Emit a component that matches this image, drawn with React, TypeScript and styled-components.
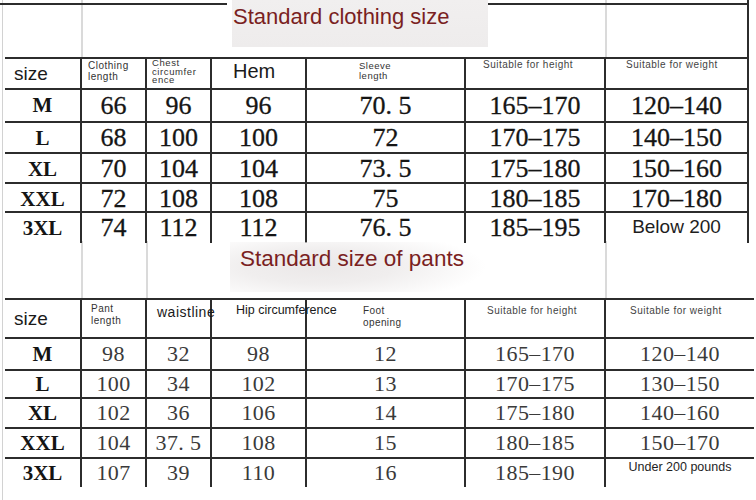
import React from 'react';
import styled, { createGlobalStyle } from 'styled-components';

const Global = createGlobalStyle`
  html, body { margin: 0; padding: 0; background: #fff; }
  body { font-family: "Liberation Sans", Arial, sans-serif; }
`;

const LINE = '#2c2c2c';

const Page = styled.div`
  width: 756px;
  height: 500px;
  overflow: hidden;
  background: linear-gradient(to right, #fff 0 2px, #d2d2d2 2px 3px, #fff 3px);
`;

const Band = styled.div<{ $h: number; $lines: number[]; $edge?: boolean }>`
  width: 749px;
  height: ${(p) => p.$h}px;
  box-sizing: border-box;
  display: flex;
  align-items: flex-start;
  border-right: ${(p) => (p.$edge ? `2px solid ${LINE}` : 'none')};
  background-image: ${(p) =>
    p.$lines
      .map(
        (x) =>
          `linear-gradient(to right, transparent ${x - 1}px, #dadada ${x - 1}px, #dadada ${x + 1}px, transparent ${x + 1}px)`
      )
      .join(', ')};
`;

const Rule = styled.div<{ $w?: number }>`
  margin-top: 3px;
  height: 0;
  border-top: 2px solid ${LINE};
  ${(p) => (p.$w ? `width: ${p.$w}px;` : 'flex: 1;')}
`;

const TitleBox = styled.div<{ $soft?: boolean; $ml: number; $mt: number; $w: number; $h: number; $pl: number }>`
  margin-left: ${(p) => p.$ml}px;
  margin-top: ${(p) => p.$mt}px;
  width: ${(p) => p.$w}px;
  height: ${(p) => p.$h}px;
  box-sizing: border-box;
  padding: 4px 0 0 ${(p) => p.$pl}px;
  background: ${(p) =>
    p.$soft
      ? 'radial-gradient(ellipse 65% 75% at 35% 50%, #ebe8e8 0%, #f0eeee 45%, rgba(255,255,255,0) 100%)'
      : 'linear-gradient(to bottom, #f1efef, #eeecec)'};
  color: #7a1f22;
  font-family: "Liberation Sans", Arial, sans-serif;
  font-size: ${(p) => (p.$soft ? 22.5 : 22)}px;
  line-height: 1.15;
  white-space: nowrap;
`;

const Cell = styled.div`
  border-right: 2px solid ${LINE};
  display: flex;
  align-items: center;
  justify-content: center;
  white-space: nowrap;
  overflow: visible;
  min-width: 0;
`;

const Table = styled.div<{ $open?: boolean }>`
  margin-left: 5px;
  width: ${(p) => (p.$open ? 749 : 744)}px;
  & ${Cell}:last-child {
    border-right: ${(p) => (p.$open ? 'none' : `2px solid ${LINE}`)};
  }
`;

const Row = styled.div<{ $h: number; $open?: boolean }>`
  display: grid;
  grid-template-columns: 77px 65px 65px 95px 159px 140px ${(p) => (p.$open ? 148 : 143)}px;
  height: ${(p) => p.$h}px;
  box-sizing: border-box;
  border-top: 2px solid ${LINE};
`;

const HeadCell = styled(Cell)<{ $pl: number; $pt?: number; $mid?: boolean }>`
  justify-content: flex-start;
  align-items: ${(p) => (p.$mid ? 'center' : 'flex-start')};
  padding-left: ${(p) => p.$pl}px;
  padding-top: ${(p) => p.$pt ?? 0}px;
`;

const Label = styled.span<{ $fs: number; $ls?: number; $lh?: number; $c?: string }>`
  font-family: "Liberation Sans", Arial, sans-serif;
  font-size: ${(p) => p.$fs}px;
  letter-spacing: ${(p) => p.$ls ?? 0}px;
  line-height: ${(p) => (p.$lh ? `${p.$lh}px` : 'normal')};
  color: ${(p) => p.$c ?? '#1a1a1a'};
  white-space: pre;
`;

const SizeName = styled.span`
  font-family: "Liberation Serif", "Times New Roman", serif;
  font-weight: bold;
  font-size: 21px;
  color: #141414;
`;

const Num = styled.span<{ $light?: boolean }>`
  font-family: "Liberation Serif", "Times New Roman", serif;
  font-size: ${(p) => (p.$light ? 22 : 26)}px;
  color: ${(p) => (p.$light ? '#3a3a3a' : '#151515')};
  letter-spacing: ${(p) => (p.$light ? 0.4 : 0)}px;
  -webkit-text-stroke: ${(p) => (p.$light ? '0' : '0.3px #151515')};
`;

const NoteCell = styled(Cell)<{ $pt: number }>`
  align-items: flex-start;
  padding-top: ${(p) => p.$pt}px;
`;

type HeadDef = { text: string; pl: number; pt?: number; fs: number; ls?: number; lh?: number; c?: string; mid?: boolean };

const topHead: HeadDef[] = [
  { text: 'size', pl: 9, fs: 19, mid: true },
  { text: 'Clothing\nlength', pl: 6, pt: 1, fs: 10, ls: 0.5, lh: 11, c: '#333' },
  { text: 'Chest\ncircumfer\nence', pl: 5, pt: 0, fs: 9.5, ls: 0.6, lh: 8.5, c: '#333' },
  { text: 'Hem', pl: 21, pt: 1, fs: 20 },
  { text: 'Sleeve\nlength', pl: 52, pt: 2, fs: 9.5, ls: 0.5, lh: 10, c: '#333' },
  { text: 'Suitable for height', pl: 17, pt: 0, fs: 10, ls: 0.5, c: '#444' },
  { text: 'Suitable for weight', pl: 20, pt: 0, fs: 10, ls: 0.5, c: '#444' },
];

const bottomHead: HeadDef[] = [
  { text: 'size', pl: 9, fs: 19, mid: true },
  { text: 'Pant\nlength', pl: 9, pt: 3, fs: 10, ls: 0.5, lh: 12, c: '#333' },
  { text: 'waistline', pl: 10, pt: 4, fs: 14, ls: 0.5 },
  { text: 'Hip circumference', pl: 24, pt: 3, fs: 12.5 },
  { text: 'Foot\nopening', pl: 56, pt: 5, fs: 10, ls: 0.4, lh: 12, c: '#333' },
  { text: 'Suitable for height', pl: 21, pt: 5, fs: 10, ls: 0.5, c: '#444' },
  { text: 'Suitable for weight', pl: 24, pt: 5, fs: 10, ls: 0.5, c: '#444' },
];

type DataRow = { h: number; cells: string[]; note?: string; notePt?: number; noteFs?: number };

const topRows: DataRow[] = [
  { h: 33, cells: ['M', '66', '96', '96', '70. 5', '165–170', '120–140'] },
  { h: 31, cells: ['L', '68', '100', '100', '72', '170–175', '140–150'] },
  { h: 30, cells: ['XL', '70', '104', '104', '73. 5', '175–180', '150–160'] },
  { h: 29, cells: ['XXL', '72', '108', '108', '75', '180–185', '170–180'] },
  { h: 30, cells: ['3XL', '74', '112', '112', '76. 5', '185–195'], note: 'Below 200', notePt: 3, noteFs: 19 },
];

const bottomRows: DataRow[] = [
  { h: 32, cells: ['M', '98', '32', '98', '12', '165–170', '120–140'] },
  { h: 28, cells: ['L', '100', '34', '102', '13', '170–175', '130–150'] },
  { h: 30, cells: ['XL', '102', '36', '106', '14', '175–180', '140–160'] },
  { h: 30, cells: ['XXL', '104', '37. 5', '108', '15', '180–185', '150–170'] },
  { h: 30, cells: ['3XL', '107', '39', '110', '16', '185–190'], note: 'Under 200 pounds', notePt: 1, noteFs: 12.5 },
];

function SizeTable({
  head,
  headH,
  rows,
  light,
  open,
}: {
  head: HeadDef[];
  headH: number;
  rows: DataRow[];
  light?: boolean;
  open?: boolean;
}) {
  return (
    <Table $open={open}>
      <Row $h={headH} $open={open}>
        {head.map((d, i) => (
          <HeadCell key={i} $pl={d.pl} $pt={d.pt} $mid={d.mid}>
            <Label $fs={d.fs} $ls={d.ls} $lh={d.lh} $c={d.c}>
              {d.text}
            </Label>
          </HeadCell>
        ))}
      </Row>
      {rows.map((r, ri) => (
        <Row key={ri} $h={r.h} $open={open}>
          {r.cells.map((c, ci) => (
            <Cell key={ci}>{ci === 0 ? <SizeName>{c}</SizeName> : <Num $light={light}>{c}</Num>}</Cell>
          ))}
          {r.note && (
            <NoteCell $pt={r.notePt ?? 0}>
              <Label $fs={r.noteFs ?? 12} $c="#1e1e1e">
                {r.note}
              </Label>
            </NoteCell>
          )}
        </Row>
      ))}
    </Table>
  );
}

export default function App() {
  return (
    <>
      <Global />
      <Page>
        <Band $h={57} $lines={[82, 606]} $edge>
          <Rule $w={227} />
          <TitleBox $ml={5} $mt={0} $w={256} $h={47} $pl={1}>
            Standard clothing size
          </TitleBox>
          <Rule />
        </Band>
        <SizeTable head={topHead} headH={31} rows={topRows} />
        <Band $h={57} $lines={[82, 147, 606]}>
          <TitleBox $soft $ml={230} $mt={1} $w={256} $h={50} $pl={10}>
            Standard size of pants
          </TitleBox>
        </Band>
        <SizeTable head={bottomHead} headH={39} rows={bottomRows} light open />
      </Page>
    </>
  );
}
